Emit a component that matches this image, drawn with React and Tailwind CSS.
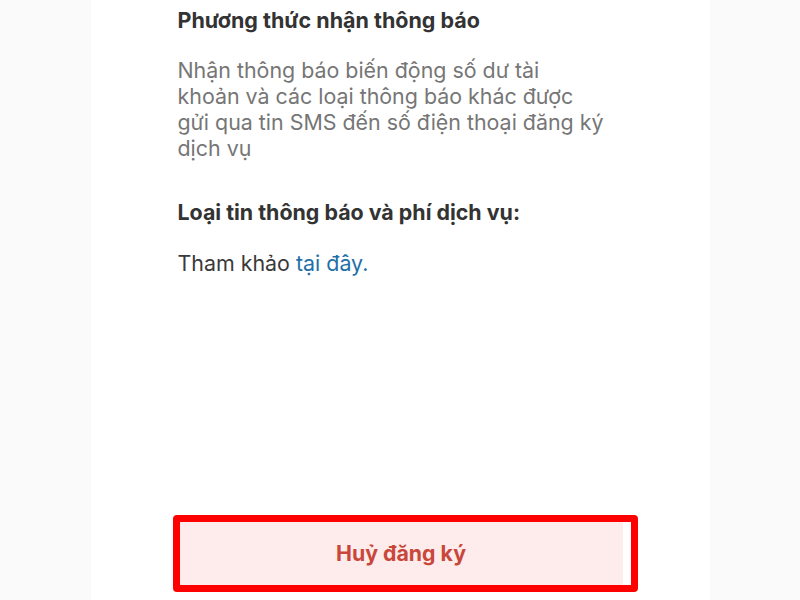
const App = () => {
  return (
    <div className="min-h-screen bg-[#fafafa] flex justify-center" style={{ fontFamily: 'Inter, "Open Sans", sans-serif' }}>
      <div className="w-[619px] h-[600px] bg-white flex flex-col">
        {/* Notification method details */}
        <div className="pl-[87px] pr-10 pt-[6px]">
          <h2 className="text-[21.5px] leading-[28px] font-bold text-[#333333]">Phương thức nhận thông báo</h2>
          <p className="mt-[23px] text-[21.4px] leading-[26px] text-[#767676]">
            Nhận thông báo biến động số dư tài
            <br />
            khoản và các loại thông báo khác được
            <br />
            gửi qua tin SMS đến số điện thoại đăng ký
            <br />
            dịch vụ
          </p>
          <h3 className="mt-[37px] text-[21.4px] leading-[28px] font-bold text-[#333333]">Loại tin thông báo và phí dịch vụ:</h3>
          <p className="mt-[24px] text-[21.4px] leading-[26px] text-[#3a3a3a]">
            Tham khảo <span className="text-[#1f6fa8]">tại đây.</span>
          </p>
        </div>

        <div className="flex-1" />

        {/* Cancel button */}
        <div className="pl-[82px] pb-[8px]">
          <div className="w-[465px] h-[77px] border-[7px] border-[#ff0000] rounded-[4px] bg-white pr-[8px] flex">
            <button className="flex-1 bg-[#fdeceb] text-[#c9473a] text-[21.3px] font-bold">Huỷ đăng ký</button>
          </div>
        </div>
      </div>
    </div>
  );
};

export default App;
